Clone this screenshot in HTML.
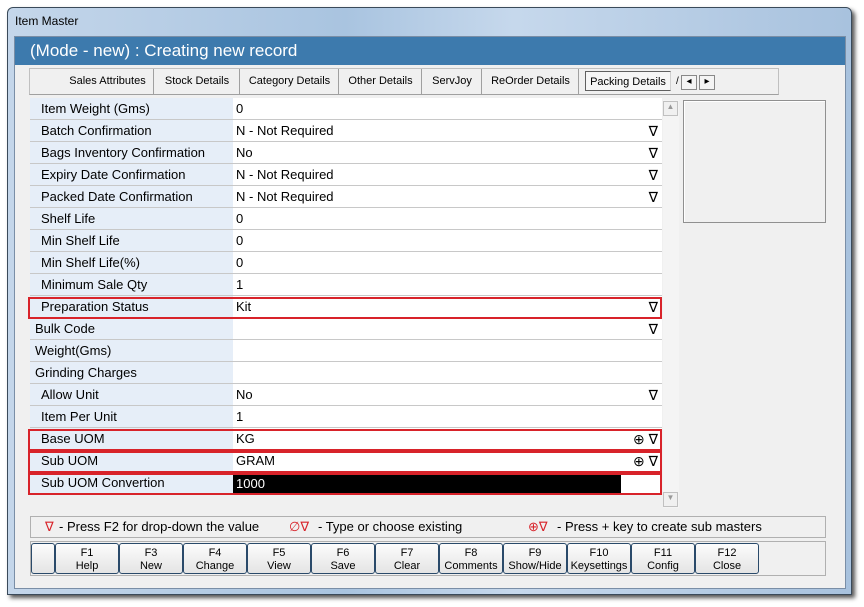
<!DOCTYPE html>
<html><head><style>
*{margin:0;padding:0;box-sizing:border-box}
body{width:864px;height:607px;background:#fff;font-family:"Liberation Sans",sans-serif;position:relative;overflow:hidden}
.abs{position:absolute}
#win{left:7px;top:7px;width:845px;height:588px;border:1px solid #3a4a5a;border-radius:6px 6px 0 0;background:linear-gradient(90deg,#c4d6ea,#a9c4e0 40%,#c6d8ec 60%,#a8c2de);box-shadow:3px 3px 4px #555}
#client{left:14px;top:36px;width:832px;height:553px;background:#f0f0f0;border:1px solid #7a8ea6}
#hdr{left:15px;top:37px;width:830px;height:28px;background:#3d7aad;color:#fff;font-size:17px;line-height:28px;padding-left:15px}
.tab{position:absolute;top:69px;height:25px;font-size:11px;line-height:24px;text-align:center;color:#000;border-right:1px solid #a0a0a0}
.row{position:absolute;left:30px;width:632px;height:22px;border-bottom:1px solid #c8c8c8;font-size:13px;line-height:22px}
.lab{position:absolute;left:0;top:0;width:203px;height:21px;background:#e6eef8;padding-left:11px}
.val{position:absolute;left:203px;top:0;width:429px;height:21px;background:#fff;padding-left:3px}
.dd{position:absolute;right:4px;top:0;font-size:14px}
.red{position:absolute;left:28px;width:634px;height:22px;border:2px solid #d8232a}
.btn{position:absolute;top:543px;height:31px;width:64px;border:1px solid #2a4a6a;border-radius:3px;background:linear-gradient(#fcfcfc,#e4e4e4);font-size:11px;text-align:center;line-height:13px;padding-top:3px}
</style></head><body>
<div id="win" class="abs"></div>
<div class="abs" style="left:15px;top:14px;font-size:12px">Item Master</div>
<div id="client" class="abs"></div>
<div id="hdr" class="abs">(Mode - new) : Creating new record</div>
<div class="abs" style="left:29px;top:68px;width:750px;height:27px;border:1px solid #c0c0c0;border-bottom:1px solid #a0a0a0;background:#f0f0f0"></div>
<div class="tab" style="left:62px;width:92px">Sales Attributes</div>
<div class="tab" style="left:155px;width:85px">Stock Details</div>
<div class="tab" style="left:241px;width:98px">Category Details</div>
<div class="tab" style="left:340px;width:82px">Other Details</div>
<div class="tab" style="left:423px;width:59px">ServJoy</div>
<div class="tab" style="left:483px;width:96px">ReOrder Details</div>
<div class="tab" style="left:585px;top:71px;height:20px;line-height:20px;width:86px;border:1px solid #606060;border-right:1px solid #d0d0d0;background:#f6f6f6">Packing Details</div>
<div class="abs" style="left:676px;top:75px;width:48px;height:16px;font-size:10px">
<span style="display:inline-block;width:3px">/</span><span style="display:inline-block;width:16px;height:15px;border:1px solid #888;background:#f4f4f4;text-align:center;margin-left:2px">◂</span><span style="display:inline-block;width:16px;height:15px;border:1px solid #888;background:#f4f4f4;text-align:center;margin-left:2px">▸</span></div>

<div class="abs" style="left:663px;top:100px;width:16px;height:408px;background:#f4f4f4"></div>
<div class="abs" style="left:663px;top:101px;width:15px;height:15px;border:1px solid #c0c0c0;background:#f0f0f0;font-size:8px;color:#999;text-align:center">▲</div>
<div class="abs" style="left:663px;top:492px;width:15px;height:15px;border:1px solid #c0c0c0;background:#f0f0f0;font-size:8px;color:#999;text-align:center">▼</div>
<div class="abs" style="left:683px;top:100px;width:143px;height:123px;border:1px solid #909090;box-shadow:inset 1px 1px 0 #fff"></div>

<div class="row" style="top:98px"><div class="lab">Item Weight (Gms)</div><div class="val">0</div></div>
<div class="row" style="top:120px"><div class="lab">Batch Confirmation</div><div class="val">N - Not Required<span class="dd">∇</span></div></div>
<div class="row" style="top:142px"><div class="lab">Bags Inventory Confirmation</div><div class="val">No<span class="dd">∇</span></div></div>
<div class="row" style="top:164px"><div class="lab">Expiry Date Confirmation</div><div class="val">N - Not Required<span class="dd">∇</span></div></div>
<div class="row" style="top:186px"><div class="lab">Packed Date Confirmation</div><div class="val">N - Not Required<span class="dd">∇</span></div></div>
<div class="row" style="top:208px"><div class="lab">Shelf Life</div><div class="val">0</div></div>
<div class="row" style="top:230px"><div class="lab">Min Shelf Life</div><div class="val">0</div></div>
<div class="row" style="top:252px"><div class="lab">Min Shelf Life(%)</div><div class="val">0</div></div>
<div class="row" style="top:274px"><div class="lab">Minimum Sale Qty</div><div class="val">1</div></div>
<div class="row" style="top:296px"><div class="lab">Preparation Status</div><div class="val">Kit<span class="dd">∇</span></div></div>
<div class="row" style="top:318px"><div class="lab" style="padding-left:5px">Bulk Code</div><div class="val"><span class="dd">∇</span></div></div>
<div class="row" style="top:340px"><div class="lab" style="padding-left:5px">Weight(Gms)</div><div class="val"></div></div>
<div class="row" style="top:362px"><div class="lab" style="padding-left:5px">Grinding Charges</div><div class="val"></div></div>
<div class="row" style="top:384px"><div class="lab">Allow Unit</div><div class="val">No<span class="dd">∇</span></div></div>
<div class="row" style="top:406px"><div class="lab">Item Per Unit</div><div class="val">1</div></div>
<div class="row" style="top:428px"><div class="lab">Base UOM</div><div class="val">KG<span class="dd">⊕ ∇</span></div></div>
<div class="row" style="top:450px"><div class="lab">Sub UOM</div><div class="val">GRAM<span class="dd">⊕ ∇</span></div></div>
<div class="row" style="top:472px;border-bottom:none"><div class="lab">Sub UOM Convertion</div><div class="val"><div style="position:absolute;left:0;top:1px;width:388px;height:21px;background:#000;color:#fff;padding-left:3px">1000</div></div></div>
<div class="red" style="top:297px"></div>
<div class="red" style="top:429px"></div>
<div class="red" style="top:451px"></div>
<div class="red" style="top:473px"></div>

<div class="abs" style="left:30px;top:516px;width:796px;height:22px;border:1px solid #b0b0b0;font-size:13px;line-height:20px">
<span class="abs" style="left:14px;color:#d8232a">∇</span><span class="abs" style="left:28px">- Press F2 for drop-down the value</span>
<span class="abs" style="left:258px;color:#d8232a">∅∇</span><span class="abs" style="left:287px">- Type or choose existing</span>
<span class="abs" style="left:497px;color:#d8232a">⊕∇</span><span class="abs" style="left:526px">- Press + key to create sub masters</span></div>
<div class="abs" style="left:30px;top:541px;width:796px;height:35px;border:1px solid #b0b0b0"></div>
<div class="btn" style="left:31px;width:24px"></div>
<div class="btn" style="left:55px">F1<br>Help</div>
<div class="btn" style="left:119px">F3<br>New</div>
<div class="btn" style="left:183px">F4<br>Change</div>
<div class="btn" style="left:247px">F5<br>View</div>
<div class="btn" style="left:311px">F6<br>Save</div>
<div class="btn" style="left:375px">F7<br>Clear</div>
<div class="btn" style="left:439px">F8<br>Comments</div>
<div class="btn" style="left:503px">F9<br>Show/Hide</div>
<div class="btn" style="left:567px">F10<br>Keysettings</div>
<div class="btn" style="left:631px">F11<br>Config</div>
<div class="btn" style="left:695px">F12<br>Close</div>
</body></html>
